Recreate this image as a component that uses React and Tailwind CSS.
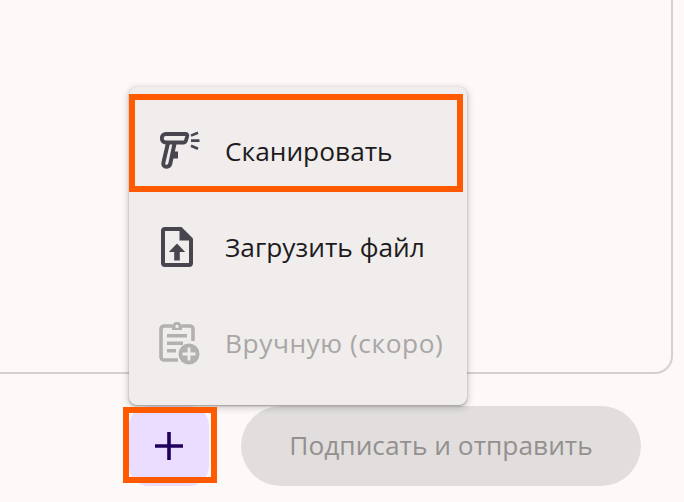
import React from "react";

function Scanner({ className }) {
  return (
    <svg viewBox="0 0 41 38" className={className} fill="none">
      <path d="M6 3h19.5c1.4 0 2.1 1 1.7 2.3l-1.3 4.4c-.4 1.2-1.2 1.8-2.4 1.8H6c-2.6 0-4.2-1.7-4.2-4.3S3.4 3 6 3Z" stroke="currentColor" strokeWidth="3.8" />
      <path d="M8 12 3.4 31.6c-.5 2.4.7 4.1 3 4.1h.5c1.8 0 2.9-1 3.3-2.6L14.6 12" stroke="currentColor" strokeWidth="4" />
      <path d="M13.5 20.5h4.5v7h-6.2Z" fill="currentColor" />
      <path d="M31 4.6 38 1.8M31 9.6H39.5M31 14.8l7 3" stroke="currentColor" strokeWidth="2.6" />
    </svg>
  );
}

function FileUp({ className }) {
  return (
    <svg viewBox="0 0 32 40" className={className} fill="none">
      <path d="M5 0h15.5L32 11.5V36a4 4 0 0 1-4 4H4a4 4 0 0 1-4-4V4a4 4 0 0 1 4-4Z" fill="currentColor" />
      <path d="M4 4h14.5v9.5H28V36H4Z" fill="#f0edec" />
      <path d="M16 16.5 24.2 25h-5.4v8.5h-5.6V25H7.8Z" fill="currentColor" />
    </svg>
  );
}

function ClipAdd({ className }) {
  return (
    <svg viewBox="0 0 41 44" className={className} fill="none">
      <path d="M13 5H5a3 3 0 0 0-3 3v28a3 3 0 0 0 3 3h14M23 5h8a3 3 0 0 1 3 3v12" stroke="currentColor" strokeWidth="3.6" />
      <path d="M13 6.2C13 3 15 1 18 1s5 2 5 5.2V9H13Z" fill="currentColor" />
      <circle cx="18" cy="5.4" r="1.7" fill="#f0edec" />
      <path d="M8 13h20v3.6H8ZM8 20.5h16v3.6H8ZM8 28h9v3.6H8Z" fill="currentColor" />
      <circle cx="30" cy="33" r="10.5" fill="currentColor" />
      <path d="M30 26.5v13M23.5 33h13" stroke="#f0edec" strokeWidth="2.8" />
    </svg>
  );
}

function Item({ icon, label, className = "" }) {
  return (
    <div className={`flex h-[96px] items-center ${className}`}>
      <div className="flex w-[96px] shrink-0 justify-center">{icon}</div>
      <span className="whitespace-nowrap">{label}</span>
    </div>
  );
}

export default function App() {
  return (
    <div className="relative flex h-[502px] w-[684px] flex-col overflow-hidden bg-[#fdf9f8] font-['Open_Sans','Noto_Sans',sans-serif]">
      <div className="-mt-5 -ml-5 mr-[11px] h-[394px] shrink-0 rounded-b-[18px] rounded-tr-[18px] border-2 border-[#d5d0cf]" />

      <div className="mt-[32px] flex items-center pl-[129px]">
        <button className="flex h-[80px] w-[80px] items-center justify-center rounded-[20px] bg-[#eaddff] text-[#21005d]">
          <svg viewBox="0 0 30 30" className="h-[30px] w-[30px]">
            <path d="M13.2 1h3.6v12.2H29v3.6H16.8V29h-3.6V16.8H1v-3.6h12.2Z" fill="currentColor" />
          </svg>
        </button>
        <button className="ml-[32px] flex h-[80px] w-[400px] items-center justify-center rounded-full bg-[#e1dedd] text-[26.3px] text-[#94908f]">
          Подписать и отправить
        </button>
      </div>

      <div className="absolute left-[129px] top-[87px] w-[338px] overflow-hidden rounded-[8px] bg-[#f0edec] pt-[16px] text-[26.3px] leading-none text-[#1d1b20] shadow-[0_2px_6px_2px_rgba(0,0,0,0.15),0_1px_2px_rgba(0,0,0,0.3)]">
        <Item icon={<Scanner className="ml-[6px] h-[38px] w-[41px] -translate-y-[1px] text-[#49454f]" />} label="Сканировать" />
        <Item icon={<FileUp className="h-[40px] w-[32px] text-[#49454f]" />} label="Загрузить файл" />
        <Item icon={<ClipAdd className="ml-[4px] h-[44px] w-[41px] text-[#b3b0b0]" />} label="Вручную (скоро)" className="tracking-[0.55px] text-[#a9a6a6]" />
        <div className="h-[14px]" />
      </div>

      <div className="absolute left-[129px] top-[94px] h-[98px] w-[334px] border-[6px] border-[#ff5a00]" />
      <div className="absolute left-[123px] top-[407px] h-[76px] w-[94px] border-[6px] border-[#ff5a00]" />
    </div>
  );
}
